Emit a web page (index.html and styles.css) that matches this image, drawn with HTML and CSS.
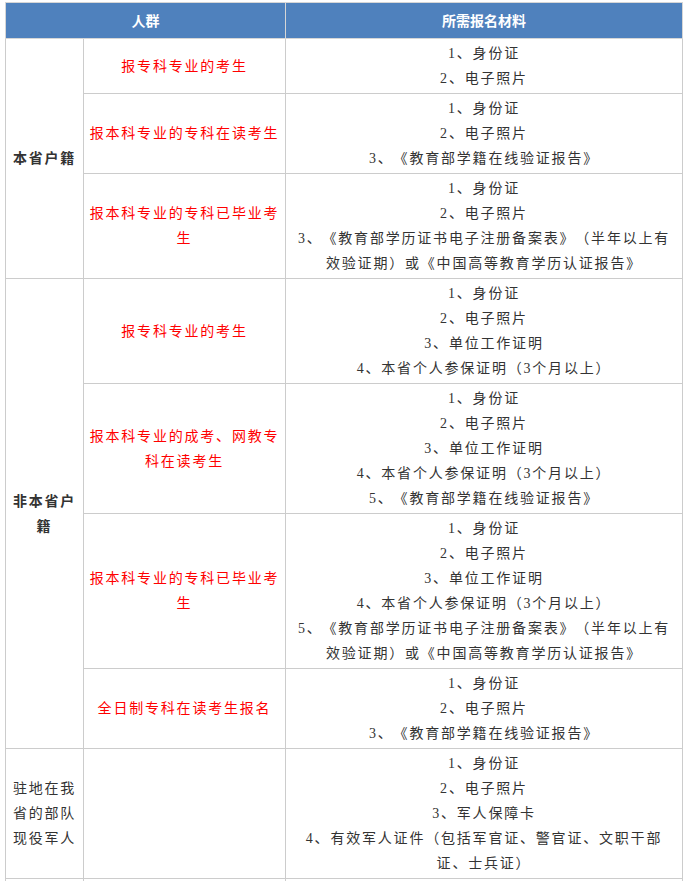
FILE: index.html
```html
<!DOCTYPE html>
<html lang="zh-CN">
<head>
<meta charset="utf-8">
<link rel="stylesheet" href="styles.css">
</head>
<body>
<table class="req">
  <colgroup>
    <col class="c1">
    <col class="c2">
    <col class="c3">
  </colgroup>
  <thead>
    <tr class="head">
      <th colspan="2">人群</th>
      <th>所需报名材料</th>
    </tr>
  </thead>
  <tbody>
    <tr>
      <td rowspan="3" class="grp bold">本省户籍</td>
      <td class="who">报专科专业的考生</td>
      <td class="mat"><p>1、身份证</p><p>2、电子照片</p></td>
    </tr>
    <tr>
      <td class="who">报本科专业的专科在读考生</td>
      <td class="mat"><p>1、身份证</p><p>2、电子照片</p><p>3、《教育部学籍在线验证报告》</p></td>
    </tr>
    <tr>
      <td class="who">报本科专业的专科已毕业考生</td>
      <td class="mat"><p>1、身份证</p><p>2、电子照片</p><p>3、《教育部学历证书电子注册备案表》（半年以上有效验证期）或《中国高等教育学历认证报告》</p></td>
    </tr>
    <tr>
      <td rowspan="4" class="grp bold">非本省户籍</td>
      <td class="who">报专科专业的考生</td>
      <td class="mat"><p>1、身份证</p><p>2、电子照片</p><p>3、单位工作证明</p><p>4、本省个人参保证明（3个月以上）</p></td>
    </tr>
    <tr>
      <td class="who">报本科专业的成考、网教专科在读考生</td>
      <td class="mat"><p>1、身份证</p><p>2、电子照片</p><p>3、单位工作证明</p><p>4、本省个人参保证明（3个月以上）</p><p>5、《教育部学籍在线验证报告》</p></td>
    </tr>
    <tr>
      <td class="who">报本科专业的专科已毕业考生</td>
      <td class="mat"><p>1、身份证</p><p>2、电子照片</p><p>3、单位工作证明</p><p>4、本省个人参保证明（3个月以上）</p><p>5、《教育部学历证书电子注册备案表》（半年以上有效验证期）或《中国高等教育学历认证报告》</p></td>
    </tr>
    <tr>
      <td class="who">全日制专科在读考生报名</td>
      <td class="mat"><p>1、身份证</p><p>2、电子照片</p><p>3、《教育部学籍在线验证报告》</p></td>
    </tr>
    <tr>
      <td class="grp">驻地在我省的部队现役军人</td>
      <td class="who"></td>
      <td class="mat"><p>1、身份证</p><p>2、电子照片</p><p>3、军人保障卡</p><p>4、有效军人证件（包括军官证、警官证、文职干部证、士兵证）</p></td>
    </tr>
    <tr class="tail">
      <td></td>
      <td></td>
      <td></td>
    </tr>
  </tbody>
</table>
</body>
</html>
```

FILE: styles.css
```css
html, body {
  margin: 0;
  background: #ffffff;
}
body {
  padding: 2px 0 0 5px;
  font-family: "Liberation Serif", "Noto Sans CJK SC", serif;
  font-size: 14px;
  color: #333333;
  text-spacing-trim: space-all;
}
.req {
  border-collapse: collapse;
  table-layout: fixed;
  width: 677px;
}
.c1 { width: 78px; }
.c2 { width: 202px; }
.c3 { width: 397px; }
.req th,
.req td {
  border: 1px solid #cccccc;
  padding: 2px 5px;
  line-height: 25px;
  text-align: center;
  vertical-align: middle;
  letter-spacing: 1.8px;
  text-spacing-trim: space-all;
}
.head th {
  background: #4f81bd;
  color: #ffffff;
  font-family: "Noto Sans CJK SC", sans-serif;
  font-weight: bold;
  height: 31px;
  padding: 2px 5px;
  letter-spacing: 0;
  border-color: #d6d6d6;
}
.grp {
  color: #333333;
}
.bold {
  font-weight: bold;
}
.who {
  color: #ff0000;
}
.mat p {
  margin: 0;
}
.tail td {
  height: 30px;
}
```
